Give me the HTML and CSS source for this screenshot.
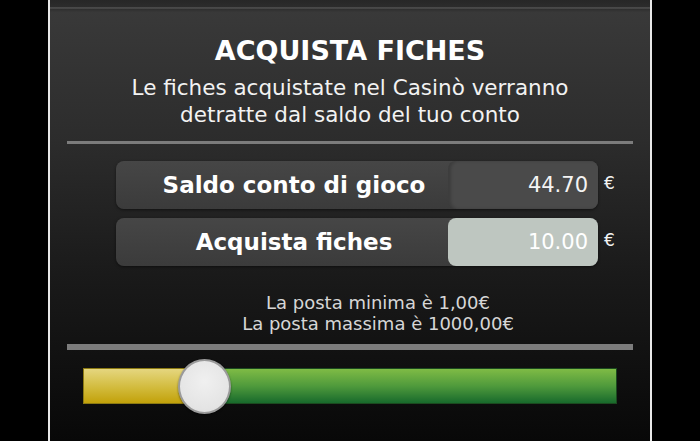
FILE: index.html
```html
<!DOCTYPE html>
<html lang="it">
<head>
    <meta charset="UTF-8">
    <meta name="viewport" content="width=device-width, initial-scale=1.0">
    <title>Acquista fiches</title>
    <link rel="stylesheet" href="styles.css">
</head>
<body>
    <div class="panel">
        <div class="topbar"></div>

        <h1 class="title">ACQUISTA FICHES</h1>
        <p class="intro">Le fiches acquistate nel Casinò verranno<br>detratte dal saldo del tuo conto</p>

        <div class="rule"></div>

        <div class="rows">
            <div class="row">
                <div class="field">
                    <span class="label">Saldo conto di gioco</span>
                    <span class="value">44.70</span>
                </div>
                <span class="currency">€</span>
            </div>
            <div class="row">
                <div class="field">
                    <span class="label">Acquista fiches</span>
                    <span class="value value-input">10.00</span>
                </div>
                <span class="currency">€</span>
            </div>
        </div>

        <p class="limits">La posta minima è 1,00€<br>La posta massima è 1000,00€</p>

        <div class="rule rule-thick"></div>

        <div class="slider">
            <div class="slider-fill" style="width: 22.5%"></div>
            <div class="slider-knob" style="left: 94px"></div>
        </div>
    </div>
</body>
</html>
```

FILE: styles.css
```css
html, body {
    margin: 0;
    height: 100%;
    background: #000;
}
body {
    font-family: "DejaVu Sans", Verdana, sans-serif;
    color: #fff;
}
.panel {
    width: 600px;
    height: 441px;
    margin: 0 auto;
    border-left: 2px solid #e8e8e8;
    border-right: 2px solid #e8e8e8;
    background: linear-gradient(#3a3a3a 0%, #2c2c2c 32%, #1a1a1a 62%, #080808 100%);
    overflow: hidden;
}
.topbar {
    height: 12px;
    background: linear-gradient(#272727 0, #2c2c2c 7px, #4a4a4a 7px, #444 9px, #2e2e2e 9px, #383838 12px);
}
.title {
    margin: 23px 0 0;
    font-size: 27px;
    line-height: 32px;
    font-weight: bold;
    text-align: center;
}
.intro {
    margin: 7px 0 0;
    font-size: 21.5px;
    line-height: 27px;
    text-align: center;
    color: #f2f2f2;
}
.rule {
    height: 3px;
    margin: 13px 17px 0;
    background: #7c7c7c;
}
.rows {
    margin: 17px 0 0 66px;
    display: flex;
    flex-direction: column;
    gap: 9px;
}
.row {
    display: flex;
    align-items: flex-start;
    gap: 6px;
}
.field {
    width: 482px;
    height: 48px;
    display: flex;
    border-radius: 8px;
    background: linear-gradient(#464646, #3b3b3b);
    box-shadow: 0 1px 3px rgba(0, 0, 0, 0.5);
}
.label {
    flex: 1;
    padding-left: 24px;
    font-size: 23px;
    font-weight: bold;
    line-height: 48px;
    text-align: center;
}
.value {
    width: 140px;
    padding-right: 10px;
    border-radius: 8px;
    background: #4a4a4a;
    box-shadow: inset 3px 0 3px rgba(0, 0, 0, 0.18);
    font-size: 21px;
    line-height: 48px;
    text-align: right;
    color: #f4f4f4;
}
.value-input {
    background: #bec6c0;
    box-shadow: none;
    color: #fff;
}
.currency {
    margin-top: 12px;
    font-size: 17px;
    line-height: 20px;
    color: #f2f2f2;
}
.limits {
    margin: 26px 0 0;
    padding-left: 56px;
    font-size: 18px;
    line-height: 21px;
    text-align: center;
    color: #d6d6d6;
}
.rule-thick {
    height: 6px;
    margin-top: 10px;
}
.slider {
    position: relative;
    height: 34px;
    margin: 18px 33px 0;
    border: 1px solid #1b4a1f;
    background: linear-gradient(#7fbb45, #4f9a3c 50%, #186a2c);
}
.slider-fill {
    height: 100%;
    background: linear-gradient(#e5d67f, #d2bb3c 55%, #c2a10a);
    box-shadow: 0 0 0 1px #8c7a12;
}
.slider-knob {
    position: absolute;
    top: -10px;
    width: 49px;
    height: 51px;
    border: 2px solid #9a9a9a;
    border-radius: 50%;
    background: radial-gradient(circle at 50% 40%, #f0f0f0, #e4e4e4 70%, #d8d8d8);
    box-shadow: 0 1px 2px rgba(0, 0, 0, 0.5);
}
```
